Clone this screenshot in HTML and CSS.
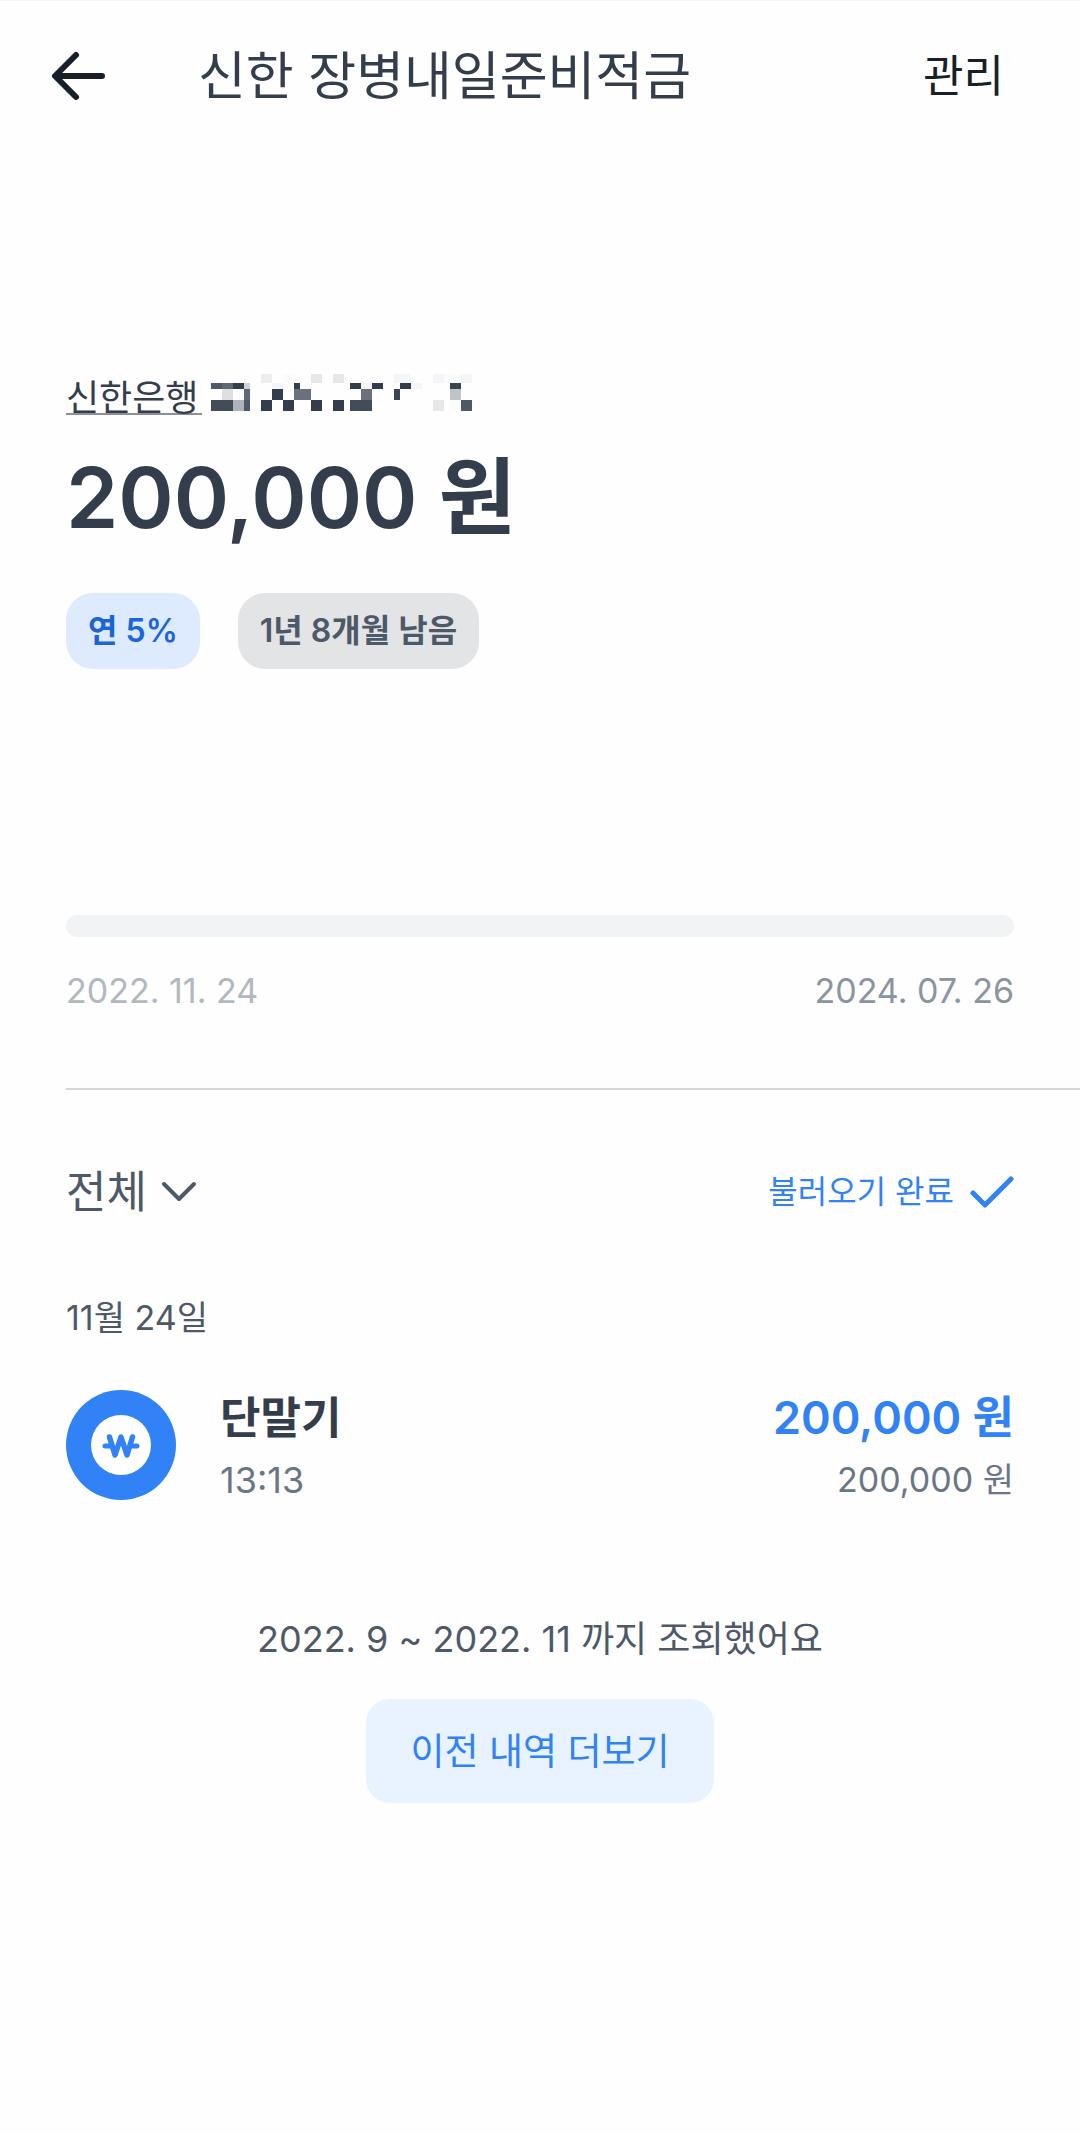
FILE: index.html
```html
<!DOCTYPE html>
<html lang="ko">
<head>
<meta charset="utf-8">
<meta name="viewport" content="width=device-width, initial-scale=1">
<title>신한 장병내일준비적금</title>
<link rel="stylesheet" href="styles.css">
</head>
<body>
<header class="topbar">
  <button class="back" type="button" aria-label="뒤로">
    <svg width="56" height="52" viewBox="0 0 56 52" fill="none" stroke="#191f28" stroke-width="6" stroke-linecap="round" stroke-linejoin="round"><path d="M26 5 L5 26 L26 47 M6 26 H52" /><path d="M5 26 L9 22 V30 Z" fill="#191f28" stroke-width="2"/></svg>
  </button>
  <h1 class="title">신한 장병내일준비적금</h1>
  <button class="manage" type="button">관리</button>
</header>
<main>
  <section class="summary">
    <div class="account">
      <a class="bank" href="#account">신한은행</a>
      <svg class="mosaic" width="261" height="37" viewBox="0 0 261 37" shape-rendering="crispEdges" role="img" aria-label="가려진 계좌번호">
        <g fill="#343d4c"><path d="M22 9h11v6h-11zM83 9h6v6h-6zM139 9h11v6h-11zM161 9h11v6h-11zM189 9h11v6h-11zM61 15h11v11h-11zM50 26h11v11h-11zM72 26h11v11h-11zM100 26h11v11h-11zM122 26h11v11h-11z"/></g>
        <g fill="#f3f5f8"><path d="M183 0h17v9h-17zM222 0h11v9h-11zM250 0h11v9h-11zM200 9h11v6h-11zM150 9h11v6h-11zM61 9h11v6h-11z"/></g>
        <g fill="#fafbfb"><path d="M72 0h11v9h-11zM233 0h17v9h-17zM239 26h11v11h-11z"/></g>
        <g fill="#e6e7e9"><path d="M100 0h11v9h-11zM122 0h11v9h-11zM222 26h11v11h-11z"/></g>
        <path fill="#edeef0" d="M50 0h11v9h-11z"/>
        <path fill="#4f5866" d="M0 9h11v6h-11zM33 26h6v11h-6zM250 26h11v11h-11z"/>
        <path fill="#606873" d="M11 9h11v6h-11zM33 15h6v11h-6z"/>
        <path fill="#cfd2d8" d="M33 9h6v6h-6z"/>
        <path fill="#3a4350" d="M239 9h11v6h-11zM183 15h6v11h-6z"/>
        <path fill="#dfdfe2" d="M11 15h11v11h-11z"/>
        <path fill="#6a707c" d="M83 15h17v11h-17zM150 15h11v11h-11z"/>
        <path fill="#c0c3c8" d="M239 15h11v11h-11z"/>
        <path fill="#434c59" d="M0 26h22v11h-22zM139 26h22v11h-22z"/>
        <path fill="#afb2ba" d="M22 26h11v11h-11z"/>
      </svg>
    </div>
    <p class="balance">200,000 원</p>
    <div class="chips">
      <span class="chip chip-rate">연 5%</span>
      <span class="chip">1년 8개월 남음</span>
    </div>
    <progress class="term" value="0" max="100" aria-label="적금 기간"></progress>
    <div class="dates">
      <time class="date-start" datetime="2022-11-24">2022. 11. 24</time>
      <time class="date-end" datetime="2024-07-26">2024. 07. 26</time>
    </div>
  </section>
  <section class="history">
    <div class="toolbar">
      <label class="filter">
        <select class="filter-select" aria-label="거래 종류"><option>전체</option></select>
        <svg width="36" height="22" viewBox="0 0 36 22" fill="none" stroke="#4e5968" stroke-width="4" stroke-linecap="round" stroke-linejoin="round"><path d="M3 3 L18 18 L33 3"/></svg>
      </label>
      <p class="status">불러오기 완료
        <svg width="44" height="34" viewBox="0 0 44 34" fill="none" stroke="#3182f6" stroke-width="5" stroke-linecap="round" stroke-linejoin="round"><path d="M3 18 L15 30 L41 4"/></svg>
      </p>
    </div>
    <h2 class="day">11월 24일</h2>
    <ul class="list">
      <li class="item">
        <svg class="coin" width="110" height="110" viewBox="0 0 110 110" fill="none" aria-hidden="true">
          <circle cx="55" cy="55" r="55" fill="#3182f6"/>
          <circle cx="55" cy="55" r="30" fill="#fff"/>
          <path d="M43.500 47 L49 65 L55 47 L61 65 L66.500 47" stroke="#3182f6" stroke-width="5.500" stroke-linecap="round" stroke-linejoin="round"/>
          <path d="M39 56 H45 M65 56 H71" stroke="#3182f6" stroke-width="5" stroke-linecap="round"/>
        </svg>
        <div class="cell">
          <span class="name">단말기</span>
          <time class="time" datetime="13:13">13:13</time>
        </div>
        <div class="cell cell-end">
          <span class="amount">200,000 원</span>
          <span class="after">200,000 원</span>
        </div>
      </li>
    </ul>
    <div class="more">
      <p class="range">2022. 9 ~ 2022. 11 까지 조회했어요</p>
      <button class="more-button" type="button">이전 내역 더보기</button>
    </div>
  </section>
</main>
</body>
</html>
```
FILE: styles.css
```css
* {
  box-sizing: border-box;
  margin: 0;
  padding: 0;
}

body {
  background: #fefefe;
  color: #333d4b;
  font-family: Inter, "Noto Sans CJK KR", sans-serif;
  font-size: 36px;
  line-height: 48px;
  border-top: 1px solid #f5f6f7;
}

button,
select {
  font: inherit;
  color: inherit;
  background: none;
  border: 0;
  appearance: none;
}

svg {
  display: block;
  flex: none;
}

.topbar {
  display: flex;
  align-items: center;
  height: 150px;
  padding: 0 76px 0 50px;
}

.title {
  padding-top: 2px;
  margin-left: 92px;
  font-size: 52px;
  line-height: 72px;
  font-weight: 400;
}

.manage {
  margin-left: auto;
  color: #191f28;
  font-size: 44px;
  line-height: 60px;
}

.summary {
  padding: 223px 66px 0;
}

.account {
  display: flex;
  align-items: flex-start;
  gap: 9px;
}

.bank {
  height: 41px;
  padding-right: 4px;
  border-bottom: 2px solid #8b909a;
  color: inherit;
  text-decoration: none;
}

.balance {
  margin-top: 29px;
  font-size: 84px;
  line-height: 108px;
  font-weight: 600;
}

.chips {
  display: flex;
  gap: 38px;
  margin-top: 41px;
}

.chip {
  padding: 14px 22px;
  border-radius: 27px;
  background: #e3e4e6;
  color: #4e5968;
  font-size: 32px;
  font-weight: 600;
}

.chip-rate {
  background: #deebff;
  color: #1b64da;
}

.term {
  display: block;
  width: 100%;
  height: 22px;
  margin-top: 246px;
  border: 0;
  border-radius: 11px;
  background: #f2f3f5;
  appearance: none;
  overflow: hidden;
}

.term::-webkit-progress-bar {
  background: #f2f3f5;
}

.term::-webkit-progress-value {
  background: #3182f6;
}

.dates {
  display: flex;
  justify-content: space-between;
  margin-top: 30px;
  font-size: 34px;
}

.date-start {
  color: #b0b8c1;
}

.date-end {
  color: #8b95a1;
}

.history {
  margin: 73px 0 0 66px;
  padding-right: 66px;
  border-top: 2px solid #d1d6db;
}

.toolbar {
  display: flex;
  align-items: center;
  justify-content: space-between;
  margin-top: 72px;
}

.filter {
  display: flex;
  align-items: center;
  gap: 14px;
  color: #4e5968;
}

.filter-select {
  font-size: 44px;
  line-height: 60px;
}

.status {
  display: flex;
  align-items: center;
  gap: 16px;
  color: #3182f6;
  font-size: 32px;
}

.day {
  margin-top: 72px;
  color: #4e5968;
  font-size: 34px;
  font-weight: 400;
}

.list {
  list-style: none;
}

.item {
  display: flex;
  align-items: center;
  margin-top: 44px;
}

.cell {
  display: flex;
  flex-direction: column;
  gap: 6px;
  margin-left: 44px;
}

.cell-end {
  margin-left: auto;
  align-items: flex-end;
}

.name {
  font-size: 44px;
  line-height: 64px;
  font-weight: 700;
}

.amount {
  color: #3182f6;
  font-size: 45px;
  line-height: 64px;
  font-weight: 600;
}

.time,
.after {
  color: #6b7684;
}

.after {
  font-size: 34px;
}

.more {
  display: flex;
  flex-direction: column;
  align-items: center;
  gap: 36px;
  margin-top: 111px;
}

.range {
  color: #4e5968;
  font-size: 36px;
}

.more-button {
  padding: 29px 44px 27px;
  border-radius: 24px;
  background: #e8f3ff;
  color: #3182f6;
  font-size: 37px;
}
```
